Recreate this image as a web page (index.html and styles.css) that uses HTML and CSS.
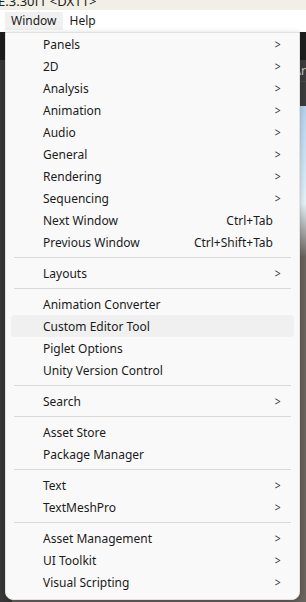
FILE: index.html
```html
<!DOCTYPE html>
<html lang="en">
<head>
  <meta charset="UTF-8">
  <meta name="viewport" content="width=device-width, initial-scale=1.0">
  <title>Window menu</title>
  <link rel="stylesheet" href="styles.css">
</head>
<body>
  <div class="title-bar">
    <span class="title-text">E.3.30f1 &lt;DX11&gt;</span>
  </div>
  <div class="menu-bar">
    <div class="menu-bar-item active">Window</div>
    <div class="menu-bar-item">Help</div>
  </div>

  <div class="editor">
    <div class="left-panel">
      <div class="panel-tab"></div>
      <div class="panel-body"></div>
    </div>
    <div class="scene">
      <div class="scene-top"></div>
      <div class="scene-tools"><span>Ar</span></div>
      <div class="scene-field"></div>
      <div class="scene-sky"></div>
      <div class="scene-ground"></div>
    </div>

    <div class="dropdown">
      <div class="item"><span>Panels</span><span class="arrow">&gt;</span></div>
      <div class="item"><span>2D</span><span class="arrow">&gt;</span></div>
      <div class="item"><span>Analysis</span><span class="arrow">&gt;</span></div>
      <div class="item"><span>Animation</span><span class="arrow">&gt;</span></div>
      <div class="item"><span>Audio</span><span class="arrow">&gt;</span></div>
      <div class="item"><span>General</span><span class="arrow">&gt;</span></div>
      <div class="item"><span>Rendering</span><span class="arrow">&gt;</span></div>
      <div class="item"><span>Sequencing</span><span class="arrow">&gt;</span></div>
      <div class="item"><span>Next Window</span><span class="shortcut">Ctrl+Tab</span></div>
      <div class="item"><span>Previous Window</span><span class="shortcut">Ctrl+Shift+Tab</span></div>
      <div class="separator"></div>
      <div class="item"><span>Layouts</span><span class="arrow">&gt;</span></div>
      <div class="separator"></div>
      <div class="item"><span>Animation Converter</span></div>
      <div class="item hover"><span>Custom Editor Tool</span></div>
      <div class="item"><span>Piglet Options</span></div>
      <div class="item"><span>Unity Version Control</span></div>
      <div class="separator"></div>
      <div class="item"><span>Search</span><span class="arrow">&gt;</span></div>
      <div class="separator"></div>
      <div class="item"><span>Asset Store</span></div>
      <div class="item"><span>Package Manager</span></div>
      <div class="separator"></div>
      <div class="item"><span>Text</span><span class="arrow">&gt;</span></div>
      <div class="item"><span>TextMeshPro</span><span class="arrow">&gt;</span></div>
      <div class="separator"></div>
      <div class="item"><span>Asset Management</span><span class="arrow">&gt;</span></div>
      <div class="item"><span>UI Toolkit</span><span class="arrow">&gt;</span></div>
      <div class="item"><span>Visual Scripting</span><span class="arrow">&gt;</span></div>
    </div>
  </div>
</body>
</html>
```

FILE: styles.css
```css
body {
  margin: 0;
  padding: 0;
  font-family: "Noto Sans", "Open Sans", sans-serif;
  font-size: 12px;
  color: #1b1b1b;
  background-color: #2a2a2a;
  overflow: hidden;
}

.title-bar {
  height: 10px;
  overflow: hidden;
  background-color: #f2efe6;
}

.title-text {
  display: block;
  margin-top: -8px;
  margin-left: -2px;
  font-size: 13px;
  line-height: 18px;
  color: #222;
}

.menu-bar {
  display: flex;
  height: 22px;
  padding: 0 5px;
  background-color: #ffffff;
}

.menu-bar-item {
  padding: 0 7px;
  margin-top: 2px;
  height: 18px;
  line-height: 18px;
  font-size: 12px;
}

.menu-bar-item.active {
  padding: 0 6px;
  background-color: #f0f0f0;
}

.editor {
  position: relative;
  display: flex;
  height: 570px;
}

.left-panel {
  width: 16px;
  display: flex;
  flex-direction: column;
}

.panel-tab {
  height: 28px;
  background-color: #1d1d1d;
}

.panel-body {
  flex: 1;
  background-color: #383838;
}

.scene {
  flex: 1;
  display: flex;
  flex-direction: column;
}

.scene-top {
  height: 28px;
  background-color: #1e1e1e;
}

.scene-tools {
  height: 21px;
  background-color: #3c3c3c;
  color: #c8c8c8;
  font-size: 12px;
  line-height: 21px;
  padding-left: 281px;
}

.scene-field {
  height: 24px;
  background-color: #3c3c3c;
  border-top: 1px solid #4a4a4a;
}

.scene-sky {
  height: 150px;
  background: linear-gradient(#b6d3ee, #d8ecf8 50%, #e6f3f8 65%, #6e6661);
}

.scene-ground {
  flex: 1;
  background-color: #6a625d;
}

.dropdown {
  position: absolute;
  top: 0;
  left: 5px;
  width: 283px;
  padding: 0 5px 6px;
  background-color: #f9f9f9;
  border: 1px solid #e2e2e2;
  border-radius: 0 0 8px 8px;
  box-shadow: 0 2px 6px rgba(0, 0, 0, 0.25);
}

.item {
  display: flex;
  align-items: center;
  height: 22px;
  padding-left: 32px;
  padding-right: 13px;
  border-radius: 4px;
  white-space: nowrap;
}

.item span:first-child {
  flex: 1;
}

.item.hover {
  background-color: #f0f0f0;
}

.arrow {
  font-size: 13px;
  color: #333;
  transform: scaleX(0.8);
}

.shortcut {
  padding-right: 8px;
}

.separator {
  height: 1px;
  margin: 4px 3px 4px 3px;
  background-color: #d9d9d9;
}
```
